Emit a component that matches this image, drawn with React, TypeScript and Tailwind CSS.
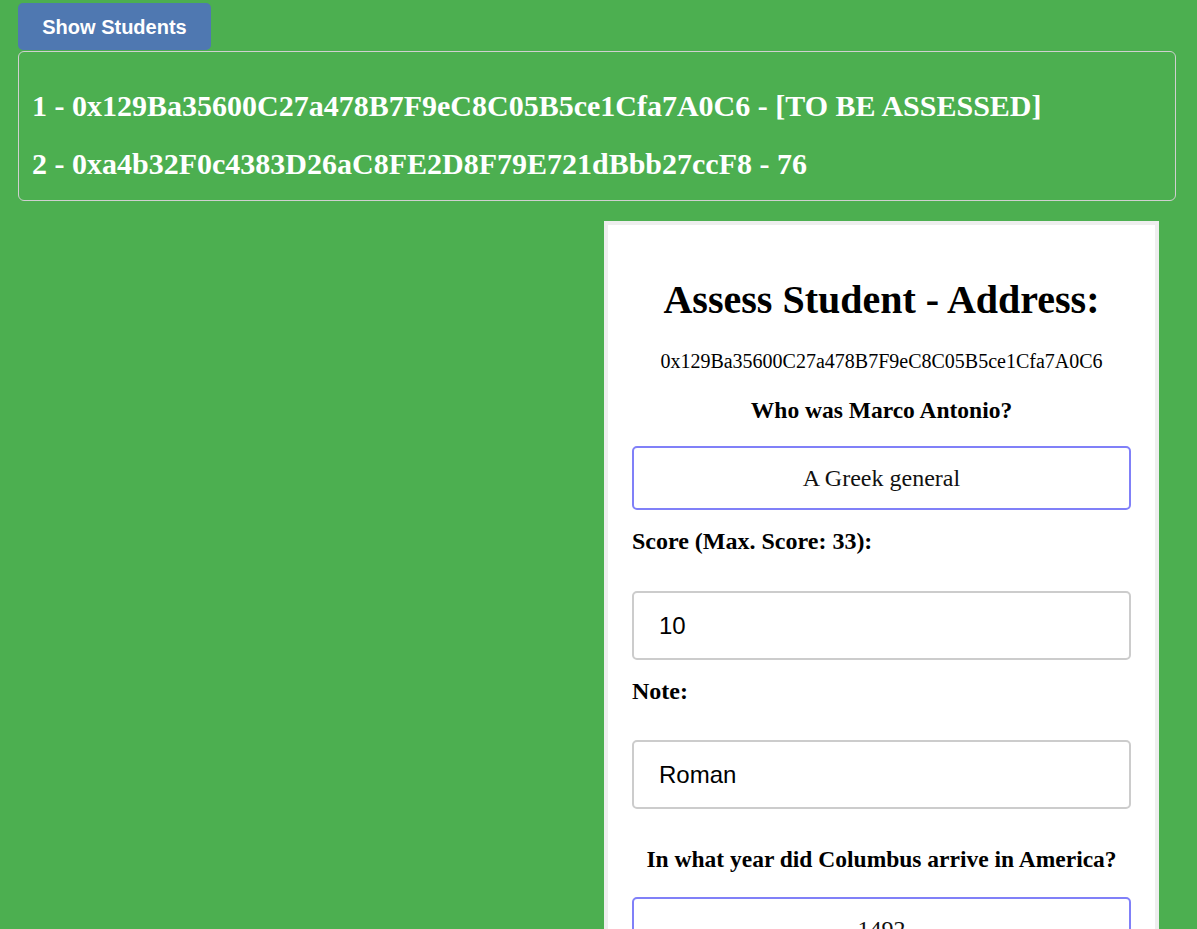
import React from "react";

const serif = { fontFamily: '"Liberation Serif", "Times New Roman", serif' };
const sans = { fontFamily: '"Liberation Sans", Arial, sans-serif' };

export default function App() {
  return (
    <div className="min-h-[929px] w-full bg-[#4CAF50] overflow-hidden" style={serif}>
      <div className="pl-[18px] pr-[21px] pt-[3px]">
        <button
          className="h-[47px] w-[193px] rounded-[5px] bg-[#4F78B1] text-white text-[20px] font-bold"
          style={sans}
        >
          Show Students
        </button>
        <div className="mt-px h-[150px] rounded-[6px] border border-[#d0d0d0] pl-[13px] pt-[37px] text-white text-[30px] font-bold leading-[34px]">
          <div>1 - 0x129Ba35600C27a478B7F9eC8C05B5ce1Cfa7A0C6 - [TO BE ASSESSED]</div>
          <div className="mt-[24px]">2 - 0xa4b32F0c4383D26aC8FE2D8F79E721dBbb27ccF8 - 76</div>
        </div>
      </div>
      <div className="flex justify-end pr-[38px] pt-[20px]">
        <div className="w-[555px] border-4 border-[#eeeeee] bg-white px-[24px] pt-[52px] pb-10 text-black">
          <h1 className="text-center text-[40px] font-bold leading-[46px]">Assess Student - Address:</h1>
          <p className="mt-[27px] text-center text-[20px] leading-[23px]">0x129Ba35600C27a478B7F9eC8C05B5ce1Cfa7A0C6</p>
          <p className="mt-[24px] text-center text-[23.5px] font-bold leading-[27px]">Who was Marco Antonio?</p>
          <div className="mt-[22px] flex h-[64px] items-center justify-center rounded-[5px] border-2 border-[#8080F8] text-[24px] text-[#111]">
            A Greek general
          </div>
          <p className="mt-[17px] text-[24px] font-bold leading-[28px]">Score (Max. Score: 33):</p>
          <input
            readOnly
            value="10"
            className="mt-[36px] block h-[69px] w-full rounded-[5px] border-2 border-[#cccccc] px-[25px] text-[24px] text-black outline-none"
            style={sans}
          />
          <p className="mt-[17px] text-[24px] font-bold leading-[28px]">Note:</p>
          <input
            readOnly
            value="Roman"
            className="mt-[35px] block h-[69px] w-full rounded-[5px] border-2 border-[#cccccc] px-[25px] text-[24px] text-black outline-none"
            style={sans}
          />
          <p className="mt-[37px] text-center text-[23.5px] font-bold leading-[27px]">In what year did Columbus arrive in America?</p>
          <div className="mt-[24px] flex h-[64px] items-center justify-center rounded-[5px] border-2 border-[#8080F8] text-[24px] text-[#111]">
            1492
          </div>
        </div>
      </div>
    </div>
  );
}
